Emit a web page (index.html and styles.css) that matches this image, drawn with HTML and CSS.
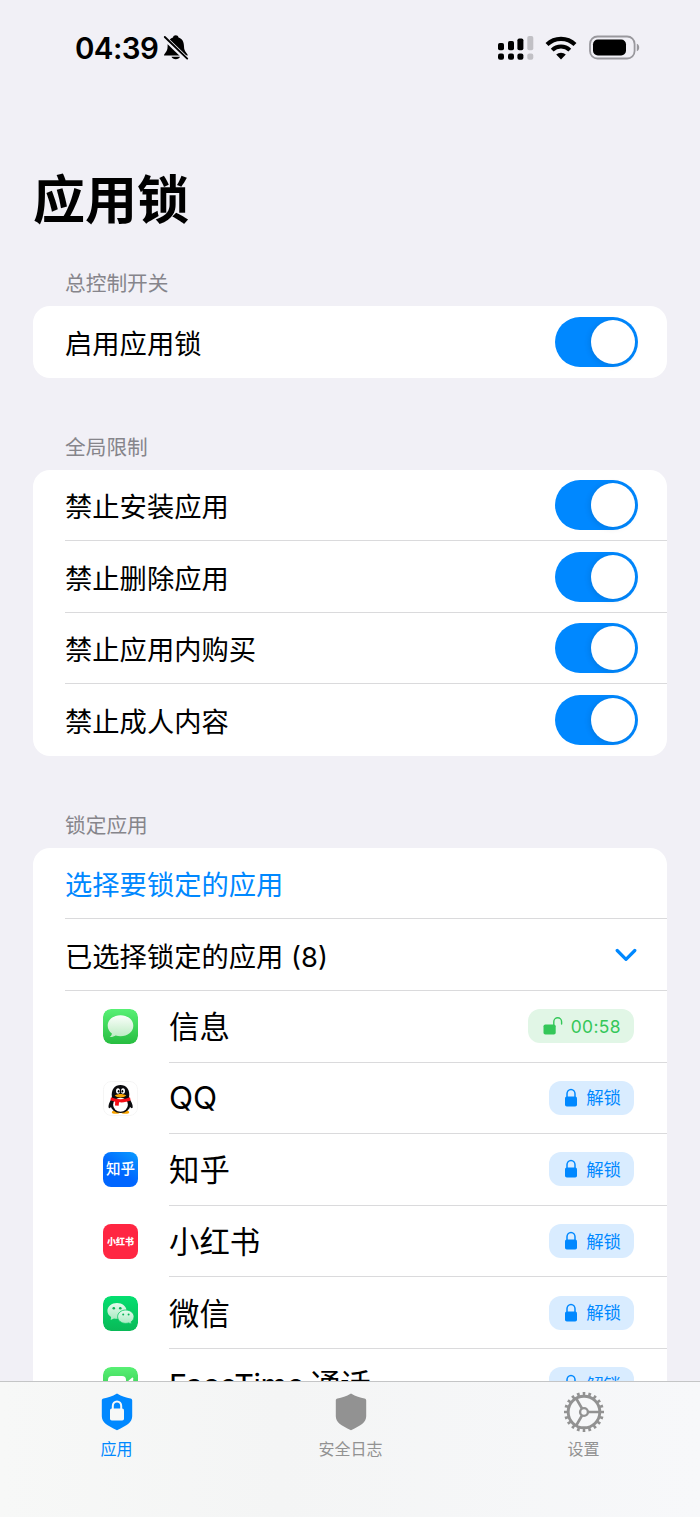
FILE: index.html
```html
<!DOCTYPE html>
<html lang="zh-CN">
<head>
  <meta charset="UTF-8">
  <title>应用锁</title>
  <link rel="stylesheet" href="styles.css">
</head>
<body>

<!-- Shared icons -->
<svg class="defs" width="0" height="0">
  <symbol id="lock" viewBox="0 0 14 20">
    <rect x="1" y="8.5" width="12" height="10" rx="1.8" fill="currentColor"/>
    <path d="M3 9V5.800a4 4.400 0 0 1 8 0V9" fill="none" stroke="currentColor" stroke-width="1.500"/>
  </symbol>
  <symbol id="unlock" viewBox="0 0 20 20">
    <rect x="0.500" y="8.500" width="12.200" height="10" rx="1.800" fill="currentColor"/>
    <path d="M10.800 9V5.800a3.900 4 0 0 1 7.800 0V8" fill="none" stroke="currentColor" stroke-width="1.400" stroke-linecap="round"/>
  </symbol>
</svg>

<div class="screen">
  <div class="content">
    <div class="status-bar">
      <span class="time">04:39</span>
      <svg class="bell" width="26" height="28" viewBox="0 0 26 28">
        <path d="M1 21.500c0-2.500 3.600-3 3.600-9C4.600 7.500 6.500 4.500 10 3.500c.3-3 5.200-3 5.500 0 3.600 1 5.500 4 5.500 9 0 6 3.800 6.500 3.800 9z"/>
        <path d="M8.500 22.800h8.500c-.8 3.200-7.700 3.200-8.500 0z"/>
        <path d="M1.200 3.500L23.500 25" stroke="#f1f0f6" stroke-width="5"/>
        <path d="M1.800 3L24.200 24.600" stroke="#000" stroke-width="1.900" stroke-linecap="round"/>
      </svg>
      <span class="spacer"></span>
      <svg class="signal" width="36" height="26" viewBox="0 0 36 26">
        <rect x="0" y="8" width="6" height="7.300" rx="1.800"/>
        <rect x="10" y="6" width="6" height="9.300" rx="1.800"/>
        <rect x="19.400" y="3.500" width="6" height="11.800" rx="1.800"/>
        <rect x="29.300" y="1" width="6" height="14.300" rx="1.800" fill="#c1c0c5"/>
        <rect x="0" y="18.500" width="6" height="6.300" rx="2"/>
        <rect x="10" y="18.500" width="6" height="6.300" rx="2"/>
        <rect x="19.400" y="18.500" width="6" height="6.300" rx="2"/>
        <rect x="29.300" y="18.500" width="6" height="6.300" rx="2" fill="#c1c0c5"/>
      </svg>
      <svg class="wifi" width="32" height="24" viewBox="0 0 32 24">
        <path d="M2 8.500a20 20 0 0 1 28 0" fill="none" stroke="#000" stroke-width="4.200"/>
        <path d="M7.200 14.100a12.500 12.500 0 0 1 17.600 0" fill="none" stroke="#000" stroke-width="4"/>
        <path d="M16 23.500l-4.800-4.900a6.900 6.900 0 0 1 9.600 0z"/>
      </svg>
      <svg class="battery" width="52" height="26" viewBox="0 0 52 26">
        <rect x="1" y="1.500" width="44.600" height="22" rx="7.500" fill="none" stroke="#99989d" stroke-width="1.800"/>
        <rect x="4" y="4.500" width="33" height="16" rx="4.800"/>
        <path d="M47.800 8.700c3.200 1.200 3.200 6.400 0 7.600z" fill="#99989d"/>
      </svg>
    </div>

    <h1 class="title">应用锁</h1>

    <h2 class="section-title">总控制开关</h2>
    <div class="card">
      <div class="row">启用应用锁 <span class="switch"></span></div>
    </div>

    <h2 class="section-title">全局限制</h2>
    <div class="card">
      <div class="row">禁止安装应用 <span class="switch"></span></div>
      <div class="row">禁止删除应用 <span class="switch"></span></div>
      <div class="row">禁止应用内购买 <span class="switch"></span></div>
      <div class="row">禁止成人内容 <span class="switch"></span></div>
    </div>

    <h2 class="section-title">锁定应用</h2>
    <div class="card">
      <div class="row link">选择要锁定的应用</div>
      <div class="row">
        已选择锁定的应用 (8)
        <svg class="chevron" width="22" height="14" viewBox="0 0 22 14">
          <path d="M2.200 2.500L11 11.300l8.800-8.800" fill="none" stroke="#0088ff" stroke-width="3.200" stroke-linecap="round" stroke-linejoin="round"/>
        </svg>
      </div>

      <div class="app">
        <svg class="app-icon" viewBox="0 0 35 35">
          <defs>
            <linearGradient id="green" x1="0" y1="0" x2="0" y2="1">
              <stop offset="0" stop-color="#58f075"/><stop offset="1" stop-color="#27bd40"/>
            </linearGradient>
            <linearGradient id="bubble" x1="0" y1="0" x2="0" y2="1">
              <stop offset="0" stop-color="#fbfffb"/><stop offset="1" stop-color="#bdebc3"/>
            </linearGradient>
          </defs>
          <rect width="35" height="35" rx="8" fill="url(#green)"/>
          <path d="M17.500 6.200c7.200 0 12.800 4.600 12.800 10.500s-5.600 10.500-12.800 10.500c-1.700 0-3.300-.2-4.800-.7-1.500 1-3.600 1.700-6 1.500 1.300-1 2.100-2.100 2.200-3.500-2.600-1.900-4.200-4.700-4.200-7.800 0-5.900 5.600-10.500 12.800-10.500z" fill="url(#bubble)"/>
        </svg>
        <div class="app-row"><span class="name">信息</span> <span class="badge open"><svg width="20" height="20"><use href="#unlock"/></svg>00:58</span></div>
      </div>

      <div class="app">
        <svg class="app-icon" viewBox="0 0 35 35">
          <rect x=".4" y=".4" width="34.200" height="34.200" rx="8" fill="#fff" stroke="#f1f1f1" stroke-width=".8"/>
          <ellipse cx="12.800" cy="31.200" rx="4" ry="1.600" fill="#f9a400"/>
          <ellipse cx="22.200" cy="31.200" rx="4" ry="1.600" fill="#f9a400"/>
          <path d="M9 17c-2 3-4 7-3.300 9.800.8 1 2-.3 3-2zM26 17c2 3 4.300 7 3.600 9.800-.8 1-2.200-.3-3.200-2z" fill="#0b0b0e"/>
          <ellipse cx="17.500" cy="23.300" rx="10" ry="8.800" fill="#0b0b0e"/>
          <path d="M9 17C7.500 8 12 4 17.500 4S27.500 8 26 17z" fill="#0b0b0e"/>
          <ellipse cx="17.500" cy="23.800" rx="7.400" ry="7" fill="#fff"/>
          <path d="M8 16.200c5.500 2.600 13.500 2.600 19 0l.6 3.400c-3.500 1.500-7.600 2.100-11.600 1.700l-.3 3.500-3.700-.4.200-3.700c-1.900-.4-3.500-.9-4.800-1.500z" fill="#f50d16"/>
          <ellipse cx="15" cy="10" rx="2" ry="2.800" fill="#fff"/>
          <ellipse cx="20" cy="10" rx="2" ry="2.800" fill="#fff"/>
          <ellipse cx="15.600" cy="10.300" rx=".9" ry="1.300"/>
          <ellipse cx="19.400" cy="10.300" rx=".9" ry="1.300"/>
          <path d="M11.700 14.600c3.500-2 8.100-2 11.600 0-2.500 2.600-9.100 2.600-11.600 0z" fill="#f9a400"/>
        </svg>
        <div class="app-row"><span class="name qq">QQ</span> <span class="badge"><svg width="14" height="20"><use href="#lock"/></svg><span class="badge-text">解锁</span></span></div>
      </div>

      <div class="app">
        <span class="app-icon zhihu">知乎</span>
        <div class="app-row"><span class="name">知乎</span> <span class="badge"><svg width="14" height="20"><use href="#lock"/></svg><span class="badge-text">解锁</span></span></div>
      </div>

      <div class="app">
        <span class="app-icon xhs">小红书</span>
        <div class="app-row"><span class="name">小红书</span> <span class="badge"><svg width="14" height="20"><use href="#lock"/></svg><span class="badge-text">解锁</span></span></div>
      </div>

      <div class="app">
        <svg class="app-icon" viewBox="0 0 35 35">
          <defs>
            <linearGradient id="wechat" x1="0" y1="0" x2="0" y2="1">
              <stop offset="0" stop-color="#04df70"/><stop offset="1" stop-color="#09b957"/>
            </linearGradient>
            <linearGradient id="wechat-bubble" x1="0" y1="0" x2="0" y2="1">
              <stop offset="0" stop-color="#e6fbee"/><stop offset="1" stop-color="#a6e9c0"/>
            </linearGradient>
          </defs>
          <rect width="35" height="35" rx="8" fill="url(#wechat)"/>
          <path d="M14 7c5.300 0 9.600 3.500 9.600 7.900s-4.300 7.900-9.600 7.900c-1.100 0-2.100-.1-3-.4l-3.300 1.500.4-3C5.900 19.500 4.400 17.300 4.400 14.900 4.400 10.500 8.700 7 14 7z" fill="url(#wechat-bubble)"/>
          <path d="M22.800 14c4.600 0 8.200 3 8.200 6.700 0 2.100-1.100 3.900-2.900 5.100l.3 2.300-2.700-1.200c-.9.300-1.900.5-2.900.5-4.600 0-8.200-3-8.200-6.700s3.600-6.700 8.200-6.700z" fill="url(#wechat-bubble)" stroke="#08c962" stroke-width=".8"/>
          <circle cx="10.800" cy="12.200" r="1.300" fill="#08b456"/>
          <circle cx="17.300" cy="12.200" r="1.300" fill="#08b456"/>
          <circle cx="20.200" cy="18.600" r="1" fill="#08b456"/>
          <circle cx="25.600" cy="18.600" r="1" fill="#08b456"/>
        </svg>
        <div class="app-row"><span class="name">微信</span> <span class="badge"><svg width="14" height="20"><use href="#lock"/></svg><span class="badge-text">解锁</span></span></div>
      </div>

      <div class="app">
        <svg class="app-icon" viewBox="0 0 35 35">
          <rect width="35" height="35" rx="8" fill="url(#green)"/>
          <rect x="5" y="9" width="18" height="17" rx="4" fill="#fff"/>
          <path d="M24 15l5-4.300c.6-.5 1.200-.2 1.200.6v12.400c0 .8-.6 1.100-1.200.6L24 20z" fill="#fff"/>
        </svg>
        <div class="app-row"><span class="name facetime">FaceTime 通话</span> <span class="badge"><svg width="14" height="20"><use href="#lock"/></svg><span class="badge-text">解锁</span></span></div>
      </div>
    </div>
  </div>

  <nav class="tab-bar">
    <div class="tab active">
      <svg width="42" height="42" viewBox="0 0 42 42">
        <path d="M21 2.500c5 3 9 4 13.500 4.900 1.200.3 1.700 1 1.700 2.100v15.700c0 6-5 9-15.200 14C10.800 34.200 5.800 31.200 5.800 25.200V9.500c0-1.100.5-1.800 1.700-2.100C12 6.500 16 5.500 21 2.500z" fill="currentColor"/>
        <rect x="14" y="17.500" width="14" height="12" rx="1.800" fill="#f7f8f7"/>
        <path d="M16.800 18v-3a4.200 4.600 0 0 1 8.400 0V18" fill="none" stroke="#f7f8f7" stroke-width="2"/>
      </svg>
      应用
    </div>
    <div class="tab">
      <svg width="42" height="42" viewBox="0 0 42 42">
        <path d="M21 2.500c5 3 9 4 13.500 4.900 1.200.3 1.700 1 1.700 2.100v15.700c0 6-5 9-15.200 14C10.800 34.200 5.800 31.200 5.800 25.200V9.500c0-1.100.5-1.800 1.700-2.100C12 6.500 16 5.500 21 2.500z" fill="currentColor"/>
      </svg>
      安全日志
    </div>
    <div class="tab">
      <svg width="42" height="42" viewBox="0 0 42 42" fill="none" stroke="currentColor">
        <!-- teeth: 20 dashes around the rim -->
        <circle cx="21" cy="21" r="18.300" stroke-width="3.400" pathLength="200" stroke-dasharray="4.600 5.400" stroke-dashoffset="2.300"/>
        <circle cx="21" cy="21" r="15.800" stroke-width="2.900"/>
        <circle cx="21" cy="21" r="3.900" stroke-width="2.400"/>
        <path d="M25 21h11M19 17.500L13.200 7.500M19 24.500l-5.800 10" stroke-width="2.600"/>
      </svg>
      设置
    </div>
  </nav>
</div>

</body>
</html>
```
FILE: styles.css
```css
* {
  box-sizing: border-box;
}

body {
  margin: 0;
  background-color: #f1f0f6;
  font-family: Inter, "Noto Sans CJK SC", sans-serif;
  color: #000;
}

.defs {
  display: none;
}

.screen {
  display: flex;
  flex-direction: column;
  width: 700px;
  height: 1517px;
  overflow: hidden;
}

.content {
  flex: 1;
  min-height: 0;
  overflow: hidden;
  padding: 0 33px;
}

.status-bar {
  display: flex;
  align-items: center;
  height: 96px;
  padding: 0 26px 0 42px;
}

.time {
  font-size: 29.5px;
  font-weight: 600;
  width: 88px;
  letter-spacing: -0.6px;
}

.spacer {
  flex: 1;
}

.wifi {
  margin: 0 12px 0 11px;
}

.title {
  margin: 73px 0 27.4px;
  font-size: 52px;
  font-weight: 700;
  line-height: 64px;
}

.section-title {
  margin: 45.7px 0 0;
  padding: 1px 0 0 32px;
  font-size: 20.7px;
  font-weight: 400;
  line-height: 45px;
  color: #86858b;
}

.title + .section-title {
  margin-top: 0;
}

.card {
  background-color: #fff;
  border-radius: 17px;
  padding-left: 32px;
  overflow: hidden;
}

.row {
  display: flex;
  align-items: center;
  justify-content: space-between;
  height: 71.6px;
  padding-right: 29px;
  font-size: 27.3px;
  border-bottom: 1px solid #dadadc;
}

.row:last-child {
  border-bottom: none;
}

.link {
  color: #0088ff;
}

.chevron {
  margin-right: 1px;
}

.switch {
  display: flex;
  justify-content: flex-end;
  width: 83px;
  height: 50px;
  padding: 3px;
  border-radius: 25px;
  background-color: #0088ff;
}

.switch::after {
  content: "";
  width: 44px;
  height: 44px;
  border-radius: 50%;
  background-color: #fff;
  box-shadow: -1px 1px 6px rgba(0, 0, 0, 0.12);
}

.app {
  display: flex;
  align-items: center;
  padding-left: 38px;
}

.app-icon {
  flex: none;
  width: 35px;
  height: 35px;
  margin-right: 31px;
  border-radius: 8px;
  color: #fff;
  text-align: center;
  line-height: 35px;
  white-space: nowrap;
}

.zhihu {
  background: linear-gradient(215deg, #0a9cff, #0066ff 55%);
  font-size: 14.5px;
  font-weight: 500;
  line-height: 33px;
}

.xhs {
  background-color: #ff2642;
  font-size: 9px;
  font-weight: 900;
}

.app-row {
  flex: 1;
  display: flex;
  align-items: center;
  justify-content: space-between;
  height: 71.6px;
  padding-right: 33px;
  border-bottom: 1px solid #dadadc;
  font-size: 30.4px;
}

.name {
  padding-bottom: 2px;
}

.qq {
  padding-bottom: 0;
  font-size: 31.500px;
}

.facetime {
  letter-spacing: -0.4px;
  word-spacing: -2px;
}

.badge {
  display: flex;
  align-items: center;
  gap: 8px;
  height: 34px;
  padding: 0 13px 0 15px;
  border-radius: 12px;
  background-color: #d9ecff;
  color: #0088ff;
  font-size: 17.4px;
}

.badge-text {
  padding-bottom: 2px;
}

.open {
  background-color: #e1f6e6;
  color: #34c759;
  letter-spacing: 0.4px;
}

.tab-bar {
  display: flex;
  height: 136px;
  border-top: 1px solid #c4c5c6;
  background: linear-gradient(to right, #f7f8f7, #f4f5f5 40%, #f7f8fa);
}

.tab {
  flex: 1;
  display: flex;
  flex-direction: column;
  align-items: center;
  padding-top: 9px;
  font-size: 16px;
  line-height: 32px;
  color: #929292;
}

.active {
  padding-right: 1px;
  color: #0088ff;
}
```
